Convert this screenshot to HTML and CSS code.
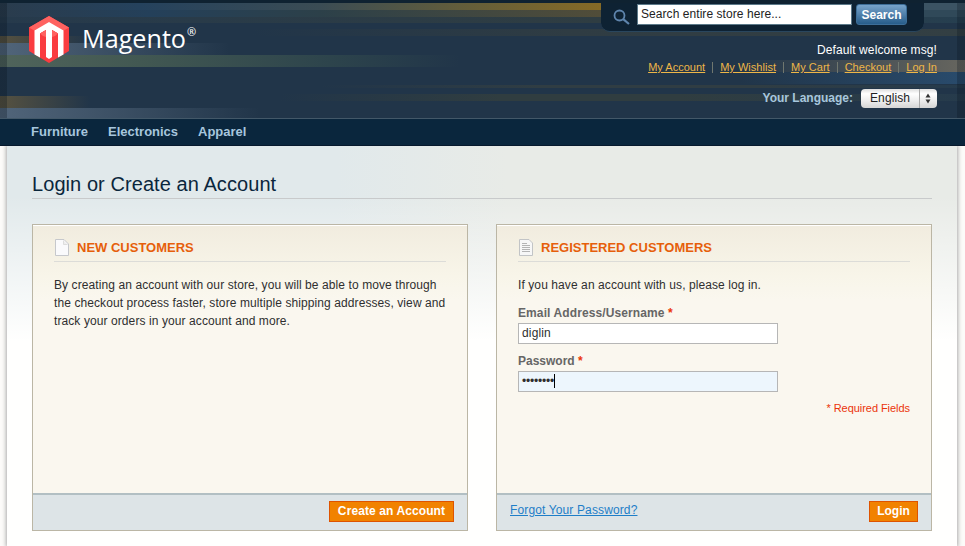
FILE: index.html
```html
<!DOCTYPE html>
<html lang="en">
<head>
<meta charset="utf-8">
<title>Customer Login</title>
<link rel="stylesheet" href="styles.css">
</head>
<body>
<div class="wrapper">
  <header class="header">
    <a class="logo">
      <svg width="40" height="47" viewBox="0 0 40 47">
        <path fill="#fa3c40" d="M20 0 40 11.5V35L20 47 0 35V11.5z"/>
        <path fill="#ff6260" d="M20 0 40 11.5 34 15 20 6 6 15 0 11.5z"/>
        <path fill="#fff" d="M20 6 34.500 14.500V38.500L29 41.500V17.500L23 14V41L20 43 17 41V14L11 17.500V41.500L5.500 38.500V14.500z"/>
        <path fill="#fa3c40" d="M11 17.500 17 14V41L11 39zM23 14 29 17.500V39L23 41z"/>
        <path fill="#ff6260" d="M11 17.500 17 14V21L14 20zM23 14 29 17.500 26 20 23 21z"/>
      </svg>
      <svg class="wordmark" width="105" height="40" viewBox="0 0 105 40">
        <text x="0" y="27" textLength="104" lengthAdjust="spacingAndGlyphs">Magento</text>
      </svg>
      <span class="reg">®</span>
    </a>
    <div class="quick">
      <form class="search">
        <svg width="18" height="18" viewBox="0 0 18 18" fill="none" stroke="#5f85ad"><circle cx="6.500" cy="6.500" r="5" stroke-width="1.800"/><path d="M10.200 10.200 16 15" stroke-width="2.200"/></svg>
        <span class="search-field">Search entire store here...</span>
        <span class="search-btn">Search</span>
      </form>
      <p class="welcome">Default welcome msg!</p>
      <ul class="links">
        <li><a>My Account</a></li><li><a>My Wishlist</a></li><li><a>My Cart</a></li><li><a>Checkout</a></li><li><a>Log In</a></li>
      </ul>
      <div class="language">
        <span class="label">Your Language:</span>
        <span class="select"><span class="value">English</span><svg width="18" height="19" viewBox="0 0 18 19"><path d="M.5 0V19" stroke="#aaa"/><path fill="#333" d="M9 4.500 11.500 8.500H6.500zM9 14.500 11.500 10.500H6.500z"/></svg></span>
      </div>
    </div>
  </header>
  <nav class="nav"><a class="n1">Furniture</a><a class="n2">Electronics</a><a class="n3">Apparel</a></nav>
  <main class="main">
    <h1>Login or Create an Account</h1>
    <div class="columns">
      <section class="card">
        <div class="content">
          <h2><svg width="15" height="17" viewBox="0 0 15 17"><path d="M1.500 .5H10L14.500 5V16.500H1.500z" fill="#fafafc" stroke="#c6c8cc"/><path d="M9.500 1.500V5.500H13.500" fill="#eee" stroke="#ddd"/></svg><span>NEW CUSTOMERS</span></h2>
          <p class="intro">By creating an account with our store, you will be able to move through<br>the checkout process faster, store multiple shipping addresses, view and<br>track your orders in your account and more.</p>
        </div>
        <div class="buttons end"><a class="button create">Create an Account</a></div>
      </section>
      <section class="card">
        <div class="content">
          <h2><svg width="15" height="17" viewBox="0 0 15 17"><path d="M1.500 .5H11L14.500 4V16.500H1.500z" fill="#f7f7f7" stroke="#c2c4c6"/><path d="M4 4.500H9M4 6.500H12M4 8.500H12M4 10.500H12M4 12.500H12" stroke="#b4b4b4"/></svg><span>REGISTERED CUSTOMERS</span></h2>
          <p class="intro">If you have an account with us, please log in.</p>
          <div class="field"><label>Email Address/Username <em>*</em></label><div class="input">diglin</div></div>
          <div class="field"><label class="pw">Password <em>*</em></label><div class="input focus"><span class="dots">••••••••</span><i class="caret"></i></div></div>
          <p class="required">* Required Fields</p>
        </div>
        <div class="buttons"><a class="forgot">Forgot Your Password?</a><a class="button login">Login</a></div>
      </section>
    </div>
  </main>
</div>
</body>
</html>
```

FILE: styles.css
```css
* { box-sizing: border-box; }
body, h1, h2, p, ul { margin: 0; padding: 0; }
body {
  height: 546px;
  overflow: hidden;
  background: #fcfbf9;
  color: #2f2f2f;
  font: 12px/18px "Liberation Sans", Arial, sans-serif;
  white-space: nowrap;
}
svg { display: block; flex: none; }

.header {
  display: flex;
  justify-content: space-between;
  height: 119px;
  padding: 0 28px 0 29px;
  border-top: 3px solid #0f2231;
  border-bottom: 1px solid #435868;
  background:
    linear-gradient(90deg, rgba(5,15,25,.28) 7px, transparent 7px 957px, rgba(5,15,25,.25) 957px) 0 0 / 100% 100% no-repeat,
    linear-gradient(90deg, #2a3c4d, #25425d 140px, #3b4c54 320px, #625d3b 460px, #856a26 600px, #3b5363 924px, #3b5363) 0 0 / 100% 7px no-repeat,
    linear-gradient(90deg, #2a3c4d, #24405a 150px, #2c4049 320px, #514d39 600px, #304959 924px, #304959) 0 7px / 100% 7px no-repeat,
    linear-gradient(90deg, #263a4c, #2f3d42 600px, #263f50) 0 14px / 100% 6px no-repeat,
    linear-gradient(90deg, #213549 250px, #2f3c43 570px, #333f43) 0 26px / 100% 7px no-repeat,
    linear-gradient(90deg, #56513f, rgba(33,53,73,0) 90px) 0 28px / 100% 12px no-repeat,
    linear-gradient(90deg, #51657a, rgba(33,53,73,0) 230px) 0 40px / 100% 12px no-repeat,
    linear-gradient(90deg, #50645b, #425852 140px, #2d444c 330px, rgba(33,53,73,0) 460px) 0 52px / 100% 12px no-repeat,
    linear-gradient(90deg, rgba(33,53,73,0) 740px, #67665f) 0 57px / 100% 12px no-repeat,
    linear-gradient(90deg, rgba(33,53,73,0) 740px, #294b6c) 0 69px / 100% 12px no-repeat,
    linear-gradient(90deg, rgba(33,53,73,0) 320px, #303d43 540px 760px, #263b4c) 0 82px / 100% 3px no-repeat,
    linear-gradient(90deg, #575240, rgba(33,53,73,0) 90px) 0 93px / 100% 12px no-repeat,
    linear-gradient(90deg, rgba(33,53,73,0) 280px, #303d40 500px 680px, #263b4c) 0 91px / 100% 7px no-repeat,
    linear-gradient(90deg, #51657a, rgba(33,53,73,0) 260px) 0 105px / 100% 11px no-repeat,
    #213549;
}
.logo { display: flex; padding-top: 13px; }
.wordmark { margin: 5px 0 0 13px; overflow: visible; }
.wordmark text { fill: #fff; font: 26px "Open Sans", "Noto Sans", sans-serif; }
.reg { margin: 10px 0 0 0; color: #fff; font: 11px/12px "Noto Sans", sans-serif; }

.quick { display: flex; flex-direction: column; align-items: flex-end; }
.search {
  display: flex;
  flex: none;
  width: 323px;
  height: 29px;
  margin-right: 13px;
  padding: 1px 0 0 12px;
  border-bottom: 1px solid #29465e;
  border-radius: 0 0 9px 9px;
  background: #0e2233;
}
.search svg { margin-top: 5px; }
.search-field {
  width: 215px;
  height: 21px;
  margin-left: 6px;
  padding-left: 3px;
  border: 1px solid #5c7989;
  background: #fff;
  color: #222;
  letter-spacing: .06px;
  line-height: 19px;
}
.search-btn {
  width: 51px;
  height: 21px;
  margin-left: 4px;
  border: 1px solid #3d6e98;
  border-radius: 3px;
  background: linear-gradient(#77a3ca, #275d8a);
  color: #fff;
  font-weight: bold;
  line-height: 20px;
  text-align: center;
}
.welcome { flex: none; margin-top: 9px; color: #fff; letter-spacing: .1px; }
.links { display: flex; list-style: none; font-size: 11px; line-height: 16px; height: 18px; color: #eeb648; }
.links li { display: flex; align-items: center; height: 16px; letter-spacing: .02px; }
.links li + li::before { content: ""; width: 1px; height: 11px; margin: 0 7px; background: #70776f; }
.links a { text-decoration: underline; }
.language { display: flex; flex: none; align-items: center; margin-top: 12px; }
.label { margin: -2px 8px 0 0; color: #a7c6dd; font-weight: bold; }
.select {
  display: flex;
  width: 76px;
  height: 19px;
  justify-content: space-between;
  border-radius: 4px;
  background: linear-gradient(#ddd, #fff 25%, #eee 60%, #d5d5d5);
  color: #222;
}
.value { padding-left: 9px; letter-spacing: .1px; }

.nav {
  display: flex;
  height: 27px;
  padding-left: 31px;
  border-bottom: 1px solid #07192d;
  background: #0a263d;
  color: #a7c6dd;
  font-size: 13px;
  font-weight: bold;
  line-height: 25px;
}
.nav a { flex: none; }
.n1 { width: 77px; }
.n2 { width: 90px; }

.main {
  width: 950px;
  height: 400px;
  margin-left: 7px;
  padding: 26px 25px 0;
  background: linear-gradient(rgba(255,255,255,0), rgba(255,255,255,0) 50px, #fffffe 195px), linear-gradient(90deg, #e1e9eb 330px, #e8ebe7 500px);
  box-shadow: 0 0 4px 1px #aaa;
  clip-path: inset(0 -7px);
}
h1 {
  height: 27px;
  border-bottom: 1px solid #c8cacb;
  color: #0a263c;
  font-size: 20px;
  font-weight: normal;
  letter-spacing: .07px;
  line-height: 24px;
}
.columns { display: flex; gap: 28px; margin-top: 25px; }
.card { width: 436px; height: 307px; border: 1px solid #bbb6a5; background: #dde4e7; }
.content {
  height: 268px;
  padding: 12px 21px;
  border-top: 1px solid #fff;
  background: linear-gradient(#f1ecdf, #f8f5e9 50px, #faf7ef 75px);
}
h2 {
  display: flex;
  height: 24px;
  border-bottom: 1px solid #dcdcd8;
  color: #e65f0b;
  font-size: 13px;
  line-height: 19px;
}
h2 svg { margin: 1px 8px 0 0; }
.intro { margin-top: 14px; letter-spacing: .09px; }
.field { padding-top: 10px; }
.field + .field { padding-top: 8px; }
label { display: block; height: 19px; color: #666; font-weight: bold; letter-spacing: .1px; }
.pw { letter-spacing: 0; }
em { color: #eb340a; font-style: normal; }
.input {
  display: flex;
  align-items: center;
  width: 260px;
  height: 21px;
  padding: 0 0 1px 3px;
  border: 1px solid #b6b6b6;
  background: #fff;
  letter-spacing: .15px;
}
.focus { background: #edf6fd; }
.dots { letter-spacing: -.2px; }
.caret { width: 1px; height: 14px; background: #000; }
.required { margin-top: 7px; color: #eb340a; font-size: 11px; letter-spacing: -.05px; text-align: right; }
.buttons {
  display: flex;
  justify-content: space-between;
  height: 37px;
  padding: 6px 13px 0;
  border-top: 2px solid #b2bfc3;
}
.end { justify-content: flex-end; }
.button {
  height: 21px;
  border: 1px solid #de5400;
  background: #f18200;
  color: #fff;
  font-weight: bold;
  line-height: 18px;
  text-align: center;
}
.create { width: 125px; letter-spacing: .1px; }
.login { width: 49px; }
.forgot { color: #1e7ec8; letter-spacing: .13px; text-decoration: underline; }
```
